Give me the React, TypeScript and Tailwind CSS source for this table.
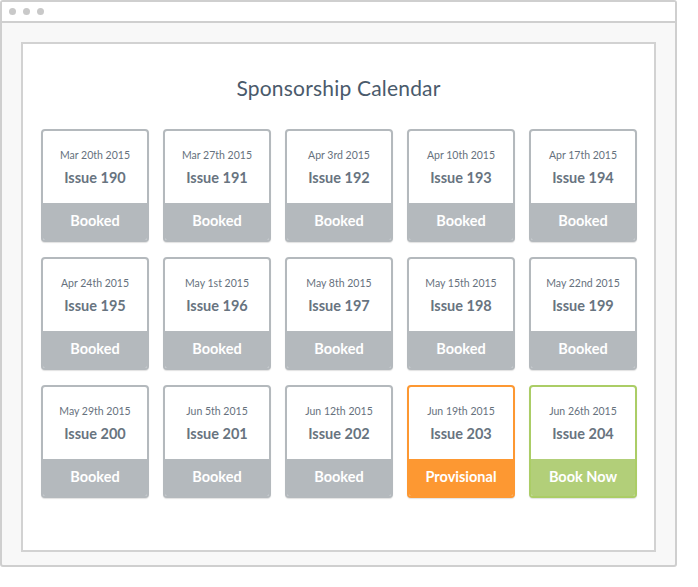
import React from "react";

type Status = "booked" | "provisional" | "open";

interface Slot {
  date: string;
  issue: number;
  status: Status;
}

const slots: Slot[] = [
  { date: "Mar 20th 2015", issue: 190, status: "booked" },
  { date: "Mar 27th 2015", issue: 191, status: "booked" },
  { date: "Apr 3rd 2015", issue: 192, status: "booked" },
  { date: "Apr 10th 2015", issue: 193, status: "booked" },
  { date: "Apr 17th 2015", issue: 194, status: "booked" },
  { date: "Apr 24th 2015", issue: 195, status: "booked" },
  { date: "May 1st 2015", issue: 196, status: "booked" },
  { date: "May 8th 2015", issue: 197, status: "booked" },
  { date: "May 15th 2015", issue: 198, status: "booked" },
  { date: "May 22nd 2015", issue: 199, status: "booked" },
  { date: "May 29th 2015", issue: 200, status: "booked" },
  { date: "Jun 5th 2015", issue: 201, status: "booked" },
  { date: "Jun 12th 2015", issue: 202, status: "booked" },
  { date: "Jun 19th 2015", issue: 203, status: "provisional" },
  { date: "Jun 26th 2015", issue: 204, status: "open" },
];

// border + band colours per status
const statusStyle: Record<Status, { card: string; band: string; label: string }> = {
  booked: { card: "border-[#b4b9bd]", band: "bg-[#b4b9bd]", label: "Booked" },
  provisional: { card: "border-[#fd9832]", band: "bg-[#fd9832]", label: "Provisional" },
  open: { card: "border-[#abcd66]", band: "bg-[#b2cf79]", label: "Book Now" },
};

const SlotCard: React.FC<{ slot: Slot }> = ({ slot }) => {
  const s = statusStyle[slot.status];
  return (
    <div
      className={`flex h-[113px] w-[108px] flex-col overflow-hidden rounded-[4px] border-2 bg-white shadow-[0_1px_1px_rgba(0,0,0,0.12)] ${s.card}`}
    >
      <div className="flex flex-1 flex-col items-center pt-[16px]">
        <span className="text-[10.5px] leading-[16px] text-[#66717d]">{slot.date}</span>
        <span className="mt-[6px] text-[14.5px] font-bold leading-[18px] text-[#68747f]">
          Issue {slot.issue}
        </span>
      </div>
      <div
        className={`flex h-[37px] items-center justify-center pb-[1px] text-[14.5px] font-bold text-white ${s.band}`}
      >
        {s.label}
      </div>
    </div>
  );
};

export default function App() {
  return (
    <div className="h-[587px] w-[698px] bg-white font-['Lato',sans-serif]">
      {/* browser window frame */}
      <div className="flex h-[567px] w-[677px] flex-col rounded-[3px] border-2 border-[#cfcfcf] bg-[#f8f8f8]">
        <div className="flex h-[21px] items-center gap-[7px] border-b-2 border-[#cfcfcf] bg-white pl-[7px]">
          <span className="h-[7px] w-[7px] rounded-full bg-[#c9c9c9]" />
          <span className="h-[7px] w-[7px] rounded-full bg-[#c9c9c9]" />
          <span className="h-[7px] w-[7px] rounded-full bg-[#c9c9c9]" />
        </div>

        {/* page panel */}
        <div className="ml-[19px] mt-[19px] h-[510px] w-[635px] border-2 border-[#d2d2d2] bg-white">
          <h1 className="pt-[30px] text-center text-[21px] leading-[28px] tracking-[0.2px] text-[#4a5a6b]">
            Sponsorship Calendar
          </h1>
          <div className="mt-[27px] grid grid-cols-[repeat(5,108px)] gap-x-[14px] gap-y-[15px] pl-[18px]">
            {slots.map((slot) => (
              <SlotCard key={slot.issue} slot={slot} />
            ))}
          </div>
        </div>
      </div>
    </div>
  );
}
